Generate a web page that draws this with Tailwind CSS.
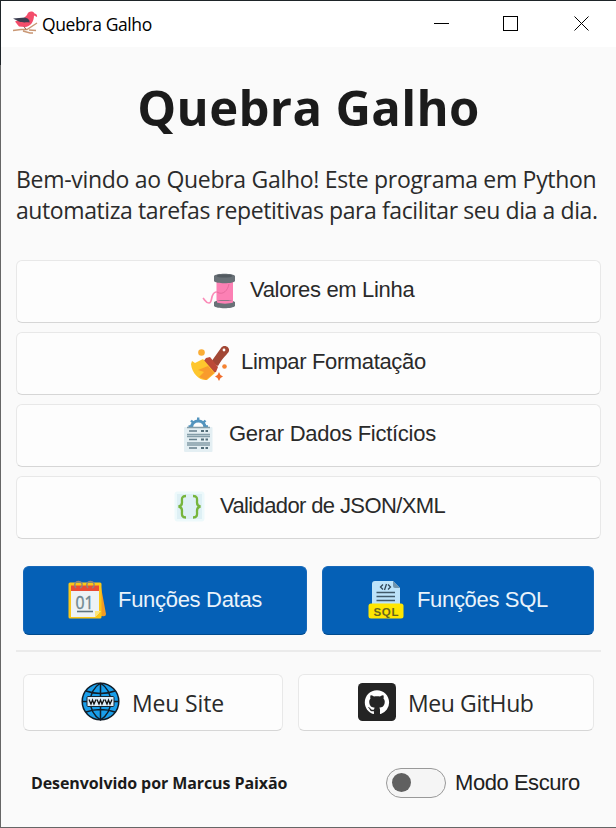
<!DOCTYPE html>
<html lang="pt-BR">
<head>
<meta charset="utf-8">
<title>Quebra Galho</title>
<script src="https://cdn.jsdelivr.net/npm/@tailwindcss/browser@4"></script>
</head>
<body class="w-[616px] h-[828px] overflow-hidden bg-[#fafafa] font-['Open_Sans','Noto_Sans',sans-serif] text-[#1b1b1b]">
<div class="relative flex flex-col w-full h-full border-t border-b border-t-[#1e2428] border-b-[#666666]">
  <div class="absolute left-0 top-0 w-px h-16 bg-[#1e2428]"></div>
  <div class="absolute left-0 top-16 w-px bottom-0 bg-[#666666]"></div>

  <!-- Title bar -->
  <header class="ml-px flex h-[46px] items-center bg-white pl-3 shrink-0">
    <svg class="w-[25px] h-[24px] mb-[2px] shrink-0" viewBox="0 0 25 24">
      <path d="M0 19.500 8 18.500 14 18.500 24 12M10 20 17 22 20 22M16 19 23 19.500" fill="none" stroke="#c99774" stroke-width="1.4"/>
      <path d="M14 4C15 0 20-.5 21.500 2.500 23 2.500 24.500 4 24 6L21 4.500C21 11 17 16 12 16L6 15.500 2 10.500 11 7Z" fill="#f34d6b"/>
      <path d="M0 7.500 12 6.500C15 7.500 17 9 16.500 11.500 13 11 10 12 6 10.500Z" fill="#3c3d50"/>
      <path d="M11 15.500 13 18.500" stroke="#8b554b"/>
    </svg>
    <span class="ml-[4px] text-[17.5px] leading-6 tracking-[-0.38px] text-black whitespace-nowrap">Quebra Galho</span>
    <svg class="ml-auto mr-[26px] w-[156px] h-4 shrink-0" viewBox="0 0 156 16" fill="none" stroke="#000" shape-rendering="crispEdges">
      <path d="M0 7.500H15"/><rect x="69.500" y=".5" width="14" height="14"/>
      <path d="M140.500 .5 154.500 14.500M154.500 .5 140.500 14.500" shape-rendering="auto"/>
    </svg>
  </header>

  <main class="ml-px flex flex-col pl-[15px] pr-[15px]">
    <h1 class="mt-[26px] h-[68px] text-center text-[49px] leading-[68px] font-bold tracking-[0.35px] whitespace-nowrap">Quebra Galho</h1>
    <p class="mt-[23px] h-[63px] text-[23px] leading-[31px] text-[#2b2b2b] whitespace-nowrap"><span class="tracking-[-0.3px]">Bem-vindo ao Quebra Galho! Este programa em Python</span><br><span class="tracking-[-0.41px]">automatiza tarefas repetitivas para facilitar seu dia a dia.</span></p>

    <!-- Text tools -->
    <div class="mt-[33px] flex flex-col gap-[9px] font-['Liberation_Sans',sans-serif] text-[22px] leading-[26px] text-[#2a2a2a]">
      <button class="flex h-[63px] items-center rounded-[6px] border border-[#e8e8e8] border-b-[#d6d6d6] bg-[#fdfdfd] pl-[185px]">
        <svg class="w-[36px] h-[38px] mb-[2px] shrink-0" viewBox="202 272 36 38">
          <path d="M203 298C205 300 206 303 209 303 213 303 210 293 216 292L219 292" fill="none" stroke="#fb8bb8" stroke-width="1.700"/>
          <rect x="216.500" y="281" width="16.500" height="23" fill="#fc80b4"/>
          <path d="M217 292C223 296 228 290 229 284" fill="none" stroke="#e76b9e"/>
          <path d="M214 276C215 273 234 273 235 276V281C234 284 215 284 214 281ZM214 302C216 299.500 233 299.500 235 302V306C233 309 216 309 214 306Z" fill="#697177"/>
          <ellipse cx="224.500" cy="276" rx="8" ry="1.600" fill="#535b61"/>
          <path d="M217 301H233V302.500C229 304 221 304 217 302.500Z" fill="#fc80b4"/>
        </svg>
        <span class="ml-[12px] mb-[3px] tracking-[-0.33px] whitespace-nowrap">Valores em Linha</span>
      </button>
      <button class="flex h-[63px] items-center rounded-[6px] border border-[#e8e8e8] border-b-[#d6d6d6] bg-[#fdfdfd] pl-[174px]">
        <svg class="w-[40px] h-[38px] mb-[2px] shrink-0" viewBox="191 344 40 38">
          <path d="M211 362 221 348C224 344 230 347 229 351 228 354 223 357 218 366Z" fill="#a24735"/>
          <circle cx="224" cy="350" r="1.400" fill="#fff"/>
          <path d="M206 358 210 357 218 367 216 372 213 373 203 362Z" fill="#bc4937"/>
          <path d="M192 361 195 363 203 359 215 373 207 380C200 381 192 374 191 364Z" fill="#fec62d"/>
          <path d="M198 370 208 366 214 373 206 380 199 377 204 372Z" fill="#f99b2c"/>
          <circle cx="201.500" cy="352.500" r="3.300" fill="#faad36"/>
          <circle cx="224.500" cy="366.500" r="2.300" fill="#f58332"/>
          <path d="M219 372 220.500 375 223 376.500 220.500 378 219 381 217.500 378 215 376.500 217.500 375Z" fill="#f06d2b"/>
        </svg>
        <span class="ml-[10px] mb-[3px] tracking-[-0.35px] whitespace-nowrap">Limpar Formatação</span>
      </button>
      <button class="flex h-[63px] items-center rounded-[6px] border border-[#e8e8e8] border-b-[#d6d6d6] bg-[#fdfdfd] pl-[167px]">
        <svg class="w-[30px] h-[38px] mb-[2px] shrink-0" viewBox="184 416 30 38">
          <rect x="184" y="427" width="28.500" height="25" rx="1" fill="#e4eff3"/>
          <path d="M191.500 427A6.800 6.800 0 0 1 205 427" fill="none" stroke="#5394be" stroke-width="3.200"/>
          <path d="M198.200 417.500V421M191 420.500 193.500 423M205.500 420.500 203 423M188.500 426.500H192M204.500 426.500H208" stroke="#5394be" stroke-width="2.400"/>
          <g fill="none" stroke="#849da8" stroke-width="1.300"><path d="M187 427.500H210M187 434.500H210M187 436.500H210M187 443H210M187 445H210"/></g>
          <g stroke="#657f8c" stroke-width="1.400"><path d="M189 431H197M189 439.500H197M189 448H197"/></g>
          <g stroke="#536e79" stroke-width="2"><path d="M201 431H204M205.500 431H208M201 439.500H204M205.500 439.500H208M201 448H204M205.500 448H208"/></g>
        </svg>
        <span class="ml-[15px] mb-[3px] tracking-[-0.28px] whitespace-nowrap">Gerar Dados Fictícios</span>
      </button>
      <button class="flex h-[63px] items-center rounded-[6px] border border-[#e8e8e8] border-b-[#d6d6d6] bg-[#fdfdfd] pl-[157px]">
        <svg class="w-[32px] h-[32px] mb-[2px] shrink-0" viewBox="0 0 32 32">
          <rect x=".5" y=".5" width="30" height="30" rx="3" fill="#edf9fb"/><rect x="3" y="3" width="25" height="25" fill="#def0f5"/>
          <path d="M12 5C7 5 8 8 8 11.500Q8 15 4.500 15.500 8 16 8 20C8 23 7 26.500 12 26.500M19 5C24 5 23 8 23 11.500Q23 15 26.500 15.500 23 16 23 20C23 23 24 26.500 19 26.500" fill="none" stroke="#77b53c" stroke-width="2.300"/>
        </svg>
        <span class="ml-[14px] mb-[3px] tracking-[-0.62px] whitespace-nowrap">Validador de JSON/XML</span>
      </button>
    </div>

    <!-- Function menus -->
    <div class="mt-[27px] ml-[7px] flex gap-[15px] font-['Liberation_Sans',sans-serif] text-[22px] leading-[26px] text-[#eaf3fb]">
      <button class="flex h-[69px] w-[284px] items-center rounded-[6px] border border-[#1668b9] border-b-[#004b8f] bg-[#0560b6] pl-[44px]">
        <svg class="w-[38px] h-[39px] mb-[2px] shrink-0" viewBox="0 0 38 39">
          <path d="M28 6 33 7 38 34Q38 37 34 36L28 37Z" fill="#f39b23"/>
          <rect x=".5" y="2.500" width="33" height="36" rx="1.500" fill="#fbc718"/>
          <path d="M3 6H31V33L27 37H3Z" fill="#edf2f5"/><path d="M3 5.500H31V11H3Z" fill="#e94c35"/>
          <path d="M27 37V31H33Z" fill="#ffe578"/>
          <path d="M8 8C5 4 8 1 11 1.500 15 2 15 7 12 8M20 8C17 4 20 1 23 1.500 27 2 27 7 24 8" fill="none" stroke="#8c8580" stroke-width="1.300"/>
          <text x="16.500" y="28.500" text-anchor="middle" textLength="18" lengthAdjust="spacingAndGlyphs" font-family="Open Sans, sans-serif" font-size="18" fill="#6e8790" stroke="#6e8790" stroke-width=".4">01</text>
          <path d="M9 31.500H25" stroke="#60757e" stroke-width="1.600"/>
        </svg>
        <span class="ml-[12px] mb-[2px] tracking-[-0.3px] whitespace-nowrap">Funções Datas</span>
      </button>
      <button class="flex h-[69px] w-[272px] items-center rounded-[6px] border border-[#1668b9] border-b-[#004b8f] bg-[#0560b6] pl-[45px]">
        <svg class="w-[36px] h-[39px] mb-[2px] shrink-0" viewBox="0 0 36 39">
          <path d="M7 1H25L32 8V25H4V4Q4 1 7 1Z" fill="#bde3fa"/><path d="M25 1V6Q25 8 27 8H32Z" fill="#7194ac"/>
          <path d="M15 4.500 12.500 7 15 9.500M20 4.500 22.500 7 20 9.500M18.500 4 16.500 10" fill="none" stroke="#33495a" stroke-width="1.300"/>
          <path d="M8.500 12.500H27M8.500 16.500H27M8.500 20.500H27" stroke="#405969" stroke-width="1.300"/>
          <rect x=".5" y="23.500" width="35" height="15" rx="2.500" fill="#ffe600"/>
          <text x="18" y="35.500" text-anchor="middle" textLength="25" font-family="Liberation Sans, sans-serif" font-size="11.500" font-weight="bold" fill="#66651d">SQL</text>
        </svg>
        <span class="ml-[13px] mb-[2px] tracking-[-0.33px] whitespace-nowrap">Funções SQL</span>
      </button>
    </div>

    <hr class="mt-[15px] h-[2px] border-0 bg-[#ebebeb]">

    <!-- Links -->
    <div class="mt-[22px] ml-[7px] flex gap-[15px] text-[23px] leading-[30px] text-[#2a2a2a]">
      <button class="flex h-[57px] w-[260px] items-center rounded-[6px] border border-[#e8e8e8] border-b-[#d6d6d6] bg-[#fdfdfd] pl-[57px]">
        <svg class="w-[39px] h-[39px] mb-[2px] shrink-0" viewBox="0 0 39 39">
          <circle cx="19.500" cy="19.500" r="18.300" fill="#199eea" stroke="#111d28" stroke-width="1.500"/>
          <path d="M19.500 1V38M1 19.500H38M5 9Q19.500 14 34 9M5 30Q19.500 25 34 30M19.500 1C6 10 6 29 19.500 38C33 29 33 10 19.500 1" fill="none" stroke="#111d28" stroke-width="1.500"/>
          <rect x="6" y="14.500" width="27" height="10" rx="1" fill="#e1eef8" stroke="#172530"/>
          <path d="M8 17.500 10 22 11.500 18 13 22 15 17.500M16 17.500 18 22 19.500 18 21 22 23 17.500M24 17.500 26 22 27.500 18 29 22 31 17.500" fill="none" stroke="#111" stroke-width="1.300"/>
        </svg>
        <span class="ml-[12px] tracking-[-0.15px] whitespace-nowrap">Meu Site</span>
      </button>
      <button class="flex h-[57px] w-[296px] items-center rounded-[6px] border border-[#e8e8e8] border-b-[#d6d6d6] bg-[#fdfdfd] pl-[59px]">
        <svg class="w-[38px] h-[38px] mb-[2px] shrink-0" viewBox="0 0 38 38">
          <rect width="38" height="38" rx="4.500" fill="#242424"/>
          <path transform="translate(6.800 7.300) scale(1.520)" fill="#fff" d="M8 0C3.580 0 0 3.580 0 8c0 3.540 2.290 6.530 5.470 7.590.4.070.55-.17.55-.38 0-.19-.01-.82-.01-1.490-2.010.37-2.530-.49-2.690-.94-.09-.23-.48-.94-.82-1.130-.28-.15-.68-.52-.01-.53.63-.01 1.080.58 1.230.82.72 1.210 1.870.87 2.330.66.07-.52.28-.87.51-1.070-1.780-.2-3.640-.89-3.640-3.950 0-.87.31-1.590.82-2.150-.08-.2-.36-1.020.08-2.120 0 0 .67-.21 2.200.82.64-.18 1.320-.27 2-.27s1.360.09 2 .27c1.530-1.040 2.200-.82 2.200-.82.44 1.100.16 1.920.08 2.120.51.56.82 1.270.82 2.150 0 3.070-1.870 3.750-3.650 3.950.29.25.54.73.54 1.480 0 1.070-.01 1.930-.01 2.200 0 .21.15.46.55.38A8.010 8.010 0 0 0 16 8c0-4.420-3.580-8-8-8Z"/>
        </svg>
        <span class="ml-[12px] tracking-[-0.4px] whitespace-nowrap">Meu GitHub</span>
      </button>
    </div>

    <!-- Credits and theme switch -->
    <footer class="mt-[36px] ml-[15px] flex h-[31px] items-center">
      <span class="w-[355px] text-[16px] leading-5 font-bold tracking-[-0.09px] whitespace-nowrap">Desenvolvido por Marcus Paixão</span>
      <span class="flex h-[30px] w-[60px] shrink-0 items-center rounded-full border-[1.5px] border-[#999] bg-[#f5f5f5] pl-[5px]"><span class="size-[19px] rounded-full bg-[#606060]"></span></span>
      <span class="ml-[9px] font-['Liberation_Sans',sans-serif] text-[22px] leading-[26px] tracking-[-0.45px] text-[#202020] whitespace-nowrap">Modo Escuro</span>
    </footer>
  </main>
</div>
</body>
</html>
